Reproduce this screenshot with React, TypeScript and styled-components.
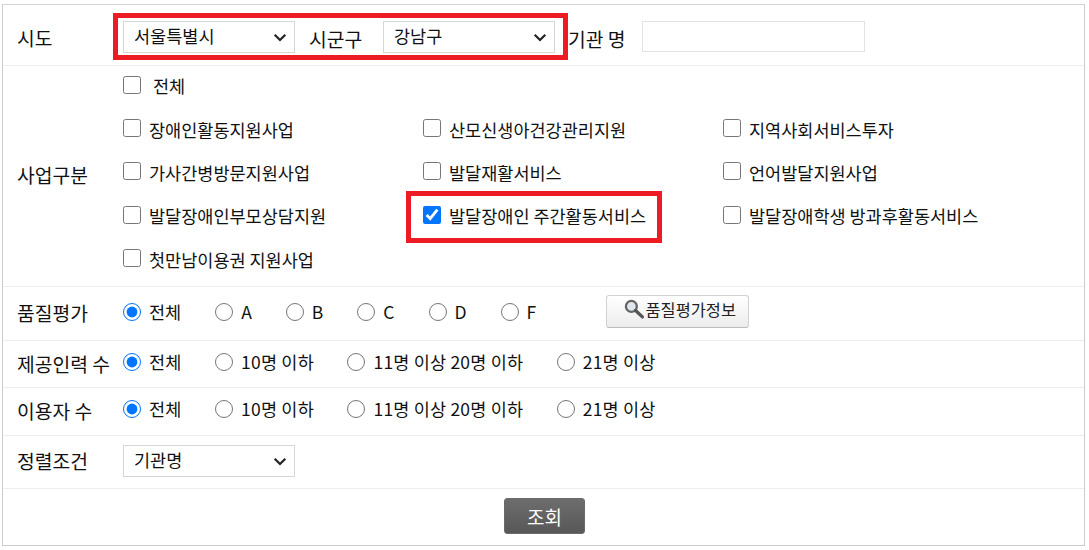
import React from "react";
import styled, { createGlobalStyle } from "styled-components";

const Global = createGlobalStyle`
  html, body { margin: 0; padding: 0; background: #fff; }
  body { font-family: "Noto Sans CJK KR", "Noto Sans", sans-serif; font-size: 17.5px; color: #111; }
`;

const chevron = "data:image/svg+xml,%3Csvg xmlns='http://www.w3.org/2000/svg' width='14' height='9' viewBox='0 0 14 9'%3E%3Cpath d='M1.7 1.7 L7 7 L12.3 1.7' fill='none' stroke='%23222' stroke-width='2.2'/%3E%3C/svg%3E";

const Panel = styled.form`
  position: relative;
  box-sizing: border-box;
  width: 1083px;
  height: 542px;
  margin: 4px 0 0 2px;
  border: 1px solid #ccc;
  border-top-color: #d4d4d4;
`;

const Row = styled.div<{ $h: number }>`
  display: grid;
  grid-template-columns: 120px 1fr;
  align-items: center;
  box-sizing: border-box;
  height: ${(p) => p.$h}px;
  border-bottom: 1px solid #eee;
`;

const Label = styled.div<{ $dy?: number }>`
  margin-top: ${(p) => p.$dy ?? 0}px;
  padding-left: 14px;
  font-size: 19.3px;
  line-height: 24px;
  white-space: nowrap;
`;

const FilterLine = styled.div`
  display: flex;
  align-items: center;
  margin-top: 4px;
  white-space: nowrap;
`;

const Line = styled.div`
  display: flex;
  align-items: center;
  white-space: nowrap;
`;

const Select = styled.select<{ $dy?: number }>`
  box-sizing: border-box;
  width: 172px;
  height: 32px;
  margin-top: ${(p) => p.$dy ?? 0}px;
  padding: 0 24px 4px 10px;
  border: 1px solid #d6d6d6;
  border-radius: 0;
  appearance: none;
  background: #fff url("${chevron}") no-repeat right 7px center;
  color: #111;
  font: inherit;
  font-size: 17.5px;
  outline: none;
`;

const InlineLabel = styled.span<{ $w: number; $pad: number }>`
  display: inline-block;
  width: ${(p) => p.$w}px;
  padding: 3px 0 0 ${(p) => p.$pad}px;
  box-sizing: border-box;
  font-size: 19.3px;
`;

const TextInput = styled.input`
  box-sizing: border-box;
  width: 223px;
  height: 31px;
  margin-top: -2px;
  border: 1px solid #e2e2e2;
  background: #fff;
`;

const CheckGrid = styled.div`
  display: grid;
  grid-template-columns: repeat(3, 300px);
  grid-auto-rows: 43.3px;
  align-items: center;
  margin-top: -6px;
`;

const Option = styled.label<{ $gap?: number; $wide?: boolean }>`
  display: inline-flex;
  align-items: center;
  gap: ${(p) => p.$gap ?? 8}px;
  ${(p) => (p.$wide ? "grid-column: 1 / -1;" : "")}
  font-size: 17.5px;
  line-height: 24px;
  white-space: nowrap;
`;

const Check = styled.input.attrs({ type: "checkbox" })`
  width: 18px;
  height: 18px;
  margin: -3px 0 0;
  accent-color: #0075ff;
`;

const Radio = styled.input.attrs({ type: "radio" })`
  width: 18px;
  height: 18px;
  margin: 0;
  accent-color: #0075ff;
`;

const RadioGroup = styled.div<{ $dy?: number; $spread?: boolean }>`
  display: flex;
  align-items: center;
  gap: ${(p) => (p.$spread ? 33.5 : 34)}px;
  margin-top: ${(p) => p.$dy ?? -4}px;
  letter-spacing: ${(p) => (p.$spread ? "0.2px" : "0")};
`;

const InfoButton = styled.button`
  display: inline-flex;
  align-items: center;
  justify-content: center;
  box-sizing: border-box;
  width: 143px;
  height: 33px;
  margin: -4px 0 0 70px;
  padding: 0 0 5px 4px;
  border: 1px solid #d2d2d2;
  border-bottom-color: #bdbdbd;
  border-radius: 3px;
  background: linear-gradient(#fff, #ececec);
  color: #222;
  font: inherit;
  font-size: 16.4px;
`;

const ButtonRow = styled.div`
  display: flex;
  justify-content: center;
  padding: 9px 0 0 2px;
`;

const SearchButton = styled.button`
  box-sizing: border-box;
  width: 81px;
  height: 36px;
  border: 1px solid #6a6a6a;
  border-radius: 3px;
  background: linear-gradient(#6d6d6d, #585858);
  color: #fff;
  font: inherit;
  font-size: 19px;
  line-height: 1;
`;

const Highlight = styled.div<{ $x: number; $y: number; $w: number; $h: number }>`
  position: absolute;
  left: ${(p) => p.$x}px;
  top: ${(p) => p.$y}px;
  width: ${(p) => p.$w}px;
  height: ${(p) => p.$h}px;
  box-sizing: border-box;
  border: 5px solid #ed1c24;
  pointer-events: none;
`;

const Magnifier = () => (
  <svg width="22" height="22" viewBox="0 0 21 21" aria-hidden="true">
    <circle cx="8" cy="8" r="5.2" fill="#dfe6ee" stroke="#666" strokeWidth="2.2" />
    <path d="M12 12 L18.5 18" stroke="#555" strokeWidth="3.2" strokeLinecap="round" />
  </svg>
);

const checks = [
  "장애인활동지원사업", "산모신생아건강관리지원", "지역사회서비스투자",
  "가사간병방문지원사업", "발달재활서비스", "언어발달지원사업",
  "발달장애인부모상담지원", "발달장애인 주간활동서비스", "발달장애학생 방과후활동서비스",
  "첫만남이용권 지원사업",
];

const sizeOptions = ["전체", "10명 이하", "11명 이상 20명 이하", "21명 이상"];

const Radios = ({ name, items }: { name: string; items: string[] }) => (
  <>
    {items.map((t, i) => (
      <Option key={t}>
        <Radio name={name} defaultChecked={i === 0} />
        {t}
      </Option>
    ))}
  </>
);

export default function App() {
  return (
    <>
      <Global />
      <Panel onSubmit={(e) => e.preventDefault()}>
        <Row $h={61}>
          <Label $dy={5}>시도</Label>
          <FilterLine>
            <Select defaultValue="서울특별시"><option>서울특별시</option></Select>
            <InlineLabel $w={88} $pad={14}>시군구</InlineLabel>
            <Select defaultValue="강남구"><option>강남구</option></Select>
            <InlineLabel $w={87} $pad={13}>기관 명</InlineLabel>
            <TextInput />
          </FilterLine>
        </Row>
        <Row $h={221}>
          <Label $dy={-2}>사업구분</Label>
          <CheckGrid>
            <Option $gap={12} $wide>
              <Check />
              전체
            </Option>
            {checks.map((t) => (
              <Option key={t}>
                <Check defaultChecked={t === "발달장애인 주간활동서비스"} />
                {t}
              </Option>
            ))}
          </CheckGrid>
        </Row>
        <Row $h={54}>
          <Label $dy={-1}>품질평가</Label>
          <Line>
            <RadioGroup>
              <Radios name="q" items={["전체", "A", "B", "C", "D", "F"]} />
            </RadioGroup>
            <InfoButton type="button"><Magnifier />품질평가정보</InfoButton>
          </Line>
        </Row>
        <Row $h={47}>
          <Label $dy={-1}>제공인력 수</Label>
          <RadioGroup $spread><Radios name="s" items={sizeOptions} /></RadioGroup>
        </Row>
        <Row $h={48}>
          <Label $dy={-1}>이용자 수</Label>
          <RadioGroup $spread $dy={-6}><Radios name="u" items={sizeOptions} /></RadioGroup>
        </Row>
        <Row $h={53}>
          <Label $dy={-2}>정렬조건</Label>
          <Select $dy={-2} defaultValue="기관명"><option>기관명</option></Select>
        </Row>
        <ButtonRow><SearchButton type="submit">조회</SearchButton></ButtonRow>
        <Highlight $x={110} $y={8} $w={455} $h={47} />
        <Highlight $x={403} $y={186} $w={256} $h={52} />
      </Panel>
    </>
  );
}
